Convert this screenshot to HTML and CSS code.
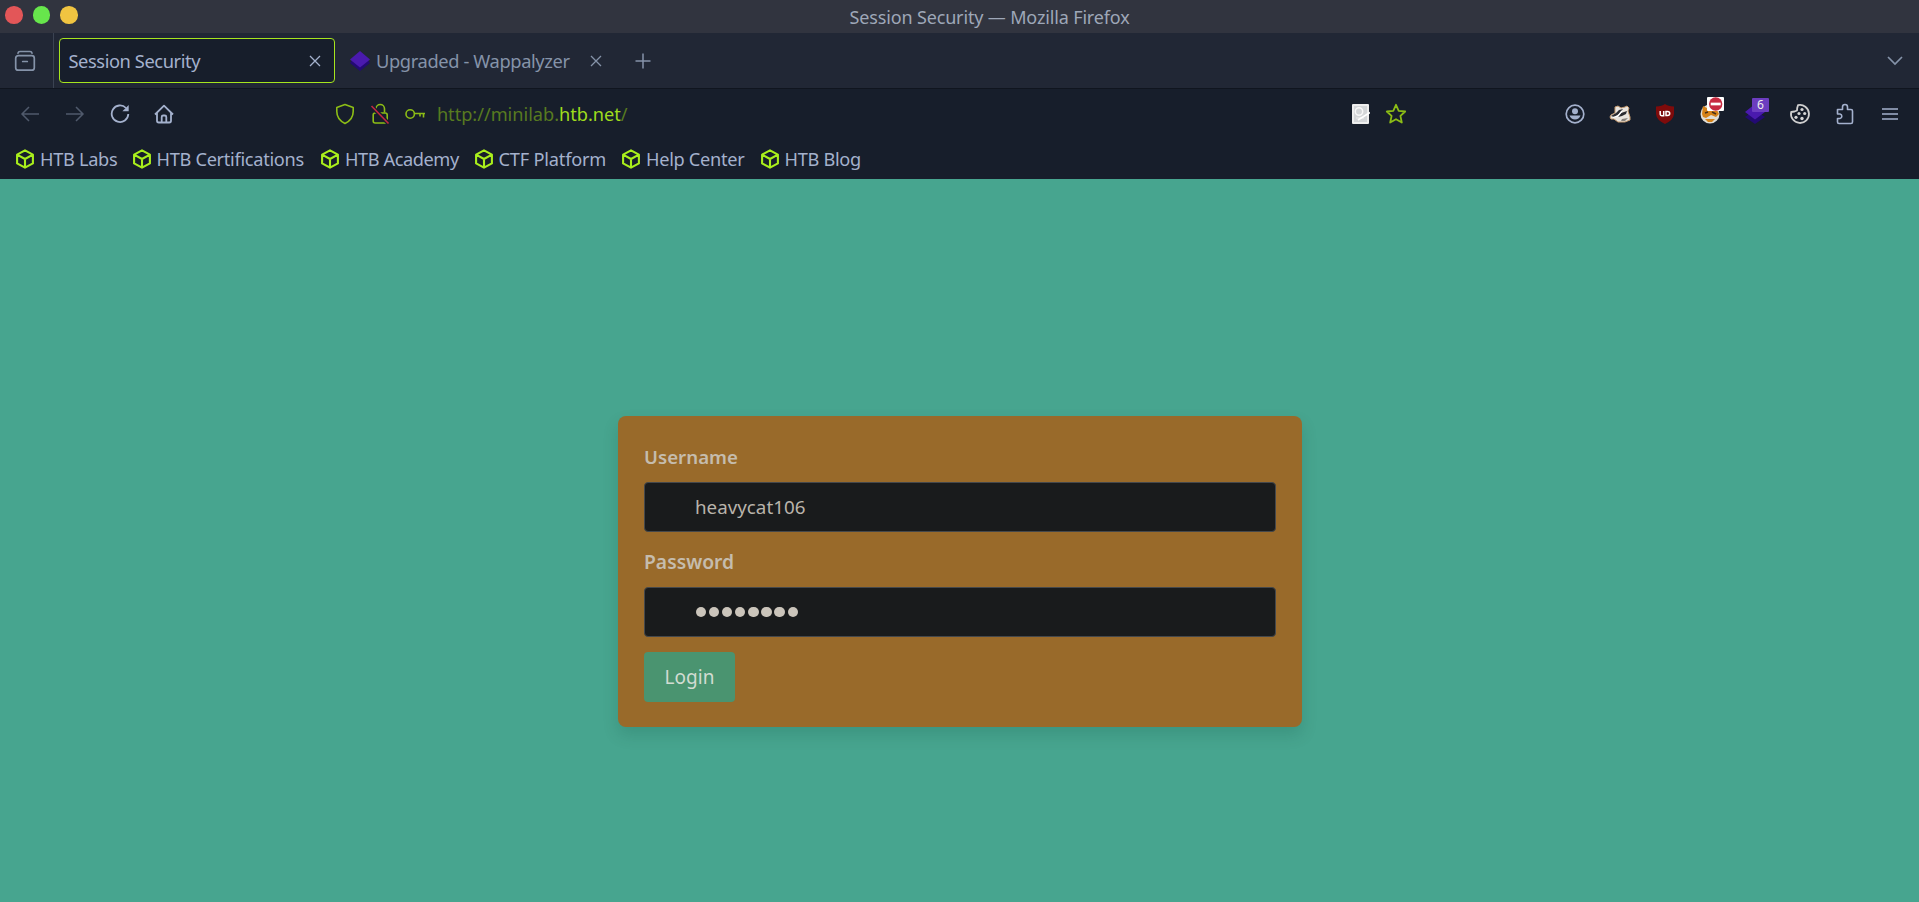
FILE: index.html
```html
<!DOCTYPE html>
<html lang="en">
<head>
<meta charset="utf-8">
<title>Session Security</title>
<link rel="stylesheet" href="styles.css">
</head>
<body>
<svg class="defs" width="0" height="0">
  <symbol id="cube" viewBox="0 0 20 20"><path d="M10 1.300 17.900 5.600V14.400L10 18.700 2.100 14.400V5.600ZM2.100 5.600 10 10 17.900 5.600M10 10V18.700" fill="none" stroke="#a9ef1c" stroke-width="2.100" stroke-linejoin="round"/></symbol>
  <symbol id="close" viewBox="0 0 12 12"><path d="M1 1 11 11M11 1 1 11" fill="none" stroke="currentColor" stroke-width="1.300"/></symbol>
</svg>

<header class="titlebar">
  <div class="lights"><i class="red"></i><i class="green"></i><i class="yellow"></i></div>
  <span class="window-title">Session Security — Mozilla Firefox</span>
</header>

<div class="tabs">
  <div class="view">
    <svg width="22" height="22" viewBox="0 0 22 22" fill="none" stroke="currentColor" stroke-width="1.700" stroke-linecap="round"><path d="M4 3.200Q4.300 1.500 6 1.500H16Q17.700 1.500 18 3.200"/><rect x="1.700" y="5.700" width="18.600" height="14.500" rx="2.500"/><path d="M8.700 11.500H13.300"/></svg>
  </div>
  <div class="tab active"><span class="t-session">Session Security</span><svg class="x" width="12" height="12"><use href="#close"/></svg></div>
  <div class="tab other">
    <svg width="20" height="20" viewBox="0 0 20 20"><path d="M0 12 3 8H17L20 12 10 20Z" fill="#230a73"/><path d="M10 0 20 8.500 10 16.500 0 8.500Z" fill="#4a1aae"/></svg>
    <span class="t-wapp">Upgraded - Wappalyzer</span><svg class="x" width="12" height="12"><use href="#close"/></svg>
  </div>
  <svg class="plus" width="16" height="16" viewBox="0 0 16 16"><path d="M8 .5V15.500M.5 8H15.500" stroke="currentColor" stroke-width="1.500"/></svg>
  <svg class="chevron" width="16" height="10" viewBox="0 0 16 10"><path d="M1 1 8 8 15 1" fill="none" stroke="currentColor" stroke-width="1.700"/></svg>
</div>

<nav class="toolbar">
  <div class="navs">
    <svg class="dim" width="20" height="20" viewBox="0 0 20 20"><path d="M19 10H2M9 3 2 10 9 17"/></svg>
    <svg class="dim" width="20" height="20" viewBox="0 0 20 20"><path d="M1 10H18M11 3 18 10 11 17"/></svg>
    <svg width="20" height="20" viewBox="0 0 20 20"><path d="M16 4A8.300 8.300 0 1 0 18.300 10"/><path d="M18.700 1V7.300H12.400Z" fill="currentColor" stroke="none"/></svg>
    <svg width="20" height="20" viewBox="0 0 20 20"><path d="M1 10.500 10 1.700 19 10.500M3 9V16.800Q3 18.500 4.700 18.500H15.300Q17 18.500 17 16.800V9M7.700 18V13Q7.700 11.500 9.200 11.500H10.800Q12.300 11.500 12.300 13V18" stroke-linejoin="round"/></svg>
  </div>
  <div class="url">
    <svg width="20" height="22" viewBox="0 0 20 22"><path d="M10 1.500 18.200 4.500V8.500Q18.200 16.500 10 20.500 1.800 16.500 1.800 8.500V4.500Z" stroke-linejoin="round"/></svg>
    <svg class="lock" width="20" height="22" viewBox="0 0 20 22"><rect x="3.200" y="10" width="14" height="10" rx="2"/><path d="M6 9.500V5.800A4.200 4.200 0 0 1 14.500 5.800V9.500"/><path d="M1.500 3 18.500 20.500" stroke="#171e2b" stroke-width="4"/><path d="M1.500 3 18.500 20.500" stroke="#c42843" stroke-width="1.600"/></svg>
    <svg class="key" width="21" height="12" viewBox="0 0 21 12"><circle cx="5.200" cy="6" r="4.200"/><path d="M9.500 5.500H20M18.500 5.500V9.500M15 5.500V8.500"/></svg>
    <span class="address">http://minilab.<b>htb.net</b>/</span>
  </div>
  <div class="page-actions">
    <svg width="18" height="20" viewBox="0 0 18 20"><rect width="17" height="20" rx="1" fill="#eee"/><path d="M2 2H15V18H2Z" fill="#d4d6d8"/><circle cx="7" cy="7.500" r="3.700" fill="none" stroke="#f8f8f8" stroke-width="1.500"/><path d="M4 14H12" stroke="#eee"/><path d="M6 16 18 8.500" stroke="#fff" stroke-width="1.700"/></svg>
    <svg width="22" height="22" viewBox="0 0 22 22"><path d="M11 1.800 13.700 7.800 20.200 8.500 15.400 12.900 16.800 19.500 11 16.200 5.200 19.500 6.600 12.900 1.800 8.500 8.300 7.800Z" fill="none" stroke="#8cbd16" stroke-width="1.800" stroke-linejoin="round"/></svg>
  </div>
  <div class="extensions">
    <svg width="20" height="20" viewBox="0 0 20 20"><circle cx="10" cy="10" r="8.800" fill="none" stroke="#a4b1cd" stroke-width="1.700"/><circle cx="10" cy="7.300" r="3" fill="#a4b1cd"/><path d="M4.500 11.500H15.500Q14 15.500 10 15.500T4.500 11.500Z" fill="#a4b1cd"/></svg>
    <svg width="22" height="20" viewBox="0 0 22 20"><path d="M1 13 2 11 6 9 6 3 9 2 12 4 16 3 18 2 20 4 19 7 21 13 21 16 16 18 9 18 5 15 2 15Z" fill="#e9e5df" stroke="#c59b70" stroke-width="1"/><path d="M2 12 7 9 10 6 14 5 10 10 5 13ZM9 13 12 9 18 7 17 10 13 12Z" fill="#2b2c31"/><path d="M13 15 19 14 16 17 12 17Z" fill="#85817c"/><path d="M4 13.500 9 12 13 7" stroke="#fff" stroke-width="1.300" fill="none"/></svg>
    <svg width="20" height="22" viewBox="0 0 20 22"><path d="M10 1Q13 3.300 19 3.500V11Q18.500 17 10 21 1.500 17 1 11V3.500Q7 3.300 10 1Z" fill="#7f0b0b"/><path d="M5.200 8V11.300Q5.200 12.700 6.700 12.700H8.700V8M11 8.500V12.500H12.500Q14.700 12.500 14.700 10.500T12.500 8.500Z" fill="none" stroke="#fff" stroke-width="1.500"/></svg>
    <svg class="fox" width="26" height="28" viewBox="0 0 26 28"><circle cx="11" cy="17" r="9.500" fill="#e0ddd5"/><path d="M3 17 4 9 8 11 18 13 20 17 17 20 12 18 7 21 4 20Z" fill="#d68218"/><path d="M6 16 9 15M13 15 17 17" stroke="#493018" stroke-width="1.500"/><path d="M6 22H16L13 25H9Z" fill="#d68218"/><rect x="8" y="0" width="17" height="14" rx="1" fill="#fff"/><circle cx="16.700" cy="7" r="6.700" fill="#c72a41"/><path d="M11.700 7H21.700" stroke="#fff" stroke-width="2.700"/></svg>
    <div class="wapp-ext"><svg width="20" height="20" viewBox="0 0 20 20"><path d="M0 13 10 6 20 13 10 20Z" fill="#230a73"/><path d="M10 0 20 8 10 15.500 0 8Z" fill="#4a1aae"/></svg><span>6</span></div>
    <svg width="20" height="20" viewBox="0 0 20 20"><path d="M8 1.200A9 9 0 1 1 1.200 8L4.500 7.500 7 6.500 7.200 4Z" fill="none" stroke="#cfcfcf" stroke-width="1.800" stroke-linejoin="round"/><g fill="#d6d6d6"><circle cx="12" cy="5.500" r="1.600"/><circle cx="9" cy="9.500" r="1.600"/><circle cx="14.700" cy="9.500" r="1.600"/><circle cx="6" cy="13.300" r="1.600"/><circle cx="12" cy="14.500" r="1.700"/></g></svg>
    <svg width="18" height="22" viewBox="0 0 18 22"><path d="M1.500 6.500H6.500V4A2.500 2.500 0 0 1 11.500 4V6.500H15Q16.500 6.500 16.500 8V19Q16.500 20.500 15 20.500H3Q1.500 20.500 1.500 19V15.500H4A2.300 2.300 0 0 0 4 11H1.500Z" fill="none" stroke="#a4b1cd" stroke-width="1.600" stroke-linejoin="round"/></svg>
    <svg width="16" height="14" viewBox="0 0 16 14"><path d="M0 2H16M0 7H16M0 12H16" stroke="#a4b1cd" stroke-width="1.500"/></svg>
  </div>
</nav>

<div class="bookmarks">
  <span class="bm b1"><svg><use href="#cube"/></svg>HTB Labs</span>
  <span class="bm b2"><svg><use href="#cube"/></svg>HTB Certifications</span>
  <span class="bm b3"><svg><use href="#cube"/></svg>HTB Academy</span>
  <span class="bm b4"><svg><use href="#cube"/></svg>CTF Platform</span>
  <span class="bm b5"><svg><use href="#cube"/></svg>Help Center</span>
  <span class="bm b6"><svg><use href="#cube"/></svg>HTB Blog</span>
</div>

<main>
  <form class="card">
    <label>Username</label>
    <div class="input">heavycat106</div>
    <label class="l-pass">Password</label>
    <div class="input dots"><i></i><i></i><i></i><i></i><i></i><i></i><i></i><i></i></div>
    <button type="button">Login</button>
  </form>
</main>
</body>
</html>
```
FILE: styles.css
```css
* { box-sizing: border-box; }
body { margin: 0; width: 100vw; height: 100vh; overflow: hidden; display: flex; flex-direction: column; background: #171e2b; color: #a4b1cd; font: 18px/24px "Noto Sans", sans-serif; }
svg { display: block; flex: none; }
.defs { position: absolute; }
span { white-space: nowrap; }

.titlebar { height: 33px; flex: none; background: #31343f; display: grid; grid-template-columns: 849.500px auto; align-items: center; color: #9ea7b8; }
.window-title { font-size: 18px; letter-spacing: -.15px; }
.lights { display: flex; gap: 10px; padding: 0 0 3px 5px; }
.lights i { width: 17.500px; height: 17.500px; border-radius: 50%; }
.red { background: #e35658; }
.green { background: #67e64c; }
.yellow { background: #f0c441; }

.tabs { height: 56px; flex: none; background: #212735; display: flex; align-items: center; color: #8593a9; border-bottom: 1px solid #10151f; }
.view { width: 54px; height: 100%; border-right: 1px solid #3b4352; display: flex; align-items: center; padding-left: 14px; }
.tab { display: flex; align-items: center; height: 45px; }
.active { width: 276px; margin-left: 5px; padding: 0 13px 0 8.500px; justify-content: space-between; border: 1px solid #a6e51e; border-radius: 4px; background: #171e2b; color: #a4b1cd; }
.t-session { font-size: 18.300px; letter-spacing: -.42px; }
.other { padding-left: 15px; }
.t-wapp { width: 220px; padding-left: 6px; font-size: 18.300px; letter-spacing: -.38px; }
.plus { margin-left: 33px; }
.chevron { margin-left: auto; margin-right: 16px; }

.toolbar { height: 51px; flex: none; display: flex; align-items: center; padding-bottom: 1px; }
.navs { display: flex; gap: 24.800px; margin-left: 20px; }
.navs svg { fill: none; stroke: currentColor; stroke-width: 1.800; }
.navs .dim { color: #505a6c; stroke-width: 1.500; }
.url { width: 1016.500px; display: flex; align-items: center; margin-left: 161px; }
.url svg { fill: none; stroke: #8cbd16; stroke-width: 1.600; }
.url .lock { margin-left: 15px; }
.url .key { margin-left: 15px; }
.address { margin-left: 10.500px; color: #577a20; font-size: 18.200px; letter-spacing: -.03px; }
.address b { font-weight: 400; color: #9fdc1d; }
.page-actions { width: 58px; display: flex; gap: 15px; align-items: center; }
.extensions { flex: 1; display: grid; grid-template-columns: repeat(8, 45px); justify-items: center; align-items: center; justify-content: end; padding-right: 7px; }
.extensions svg { overflow: visible; }
.extensions .fox { margin: -6px 0 0 5px; }
.wapp-ext { position: relative; }
.wapp-ext span { position: absolute; left: 7.500px; top: -6px; width: 17px; height: 14px; background: #6c3dc0; border-radius: 1px; color: #eee; font-size: 12px; line-height: 14px; text-align: center; }

.bookmarks { height: 39px; flex: none; display: flex; padding-left: 15px; align-items: center; padding-bottom: 2px; font-size: 18.200px; letter-spacing: -.3px; }
.bm { display: flex; align-items: center; gap: 5px; }
.bm svg { width: 20px; height: 20px; }
.b1 { width: 116.500px; } .b2 { width: 188.500px; } .b3 { width: 153.500px; letter-spacing: -.42px; } .b4 { width: 147.500px; letter-spacing: -.2px; } .b5 { width: 138.500px; }

main { flex: 1; background: #47a58f; }
.card { width: 684px; height: 310.500px; margin: 237px 0 0 618px; padding: 26px 26px 24px; border-radius: 8px; background: #996a2a; box-shadow: 0 8px 16px rgba(0, 60, 50, .16); display: flex; flex-direction: column; align-items: flex-start; }
label { height: 30px; flex: none; line-height: 30px; font-weight: 600; font-size: 18.700px; color: #c5bcad; margin-bottom: 10px; }
.l-pass { font-size: 19.300px; }
.input { width: 632px; height: 50px; flex: none; border: 1px solid #45484b; border-radius: 4px; background: #191b1c; color: #b9b4ab; padding-left: 50px; line-height: 48px; margin-bottom: 15px; font-size: 18.800px; }
.dots { display: flex; align-items: center; gap: 2.900px; padding-left: 51px; }
.dots i { width: 10.200px; height: 10.200px; border-radius: 50%; background: #cbc5bb; }
button { border: 0; width: 91px; height: 50px; flex: none; border-radius: 4px; background: #4a9470; color: #d2dcd2; font: 19px/50px "Noto Sans", sans-serif; padding: 0; }
```
